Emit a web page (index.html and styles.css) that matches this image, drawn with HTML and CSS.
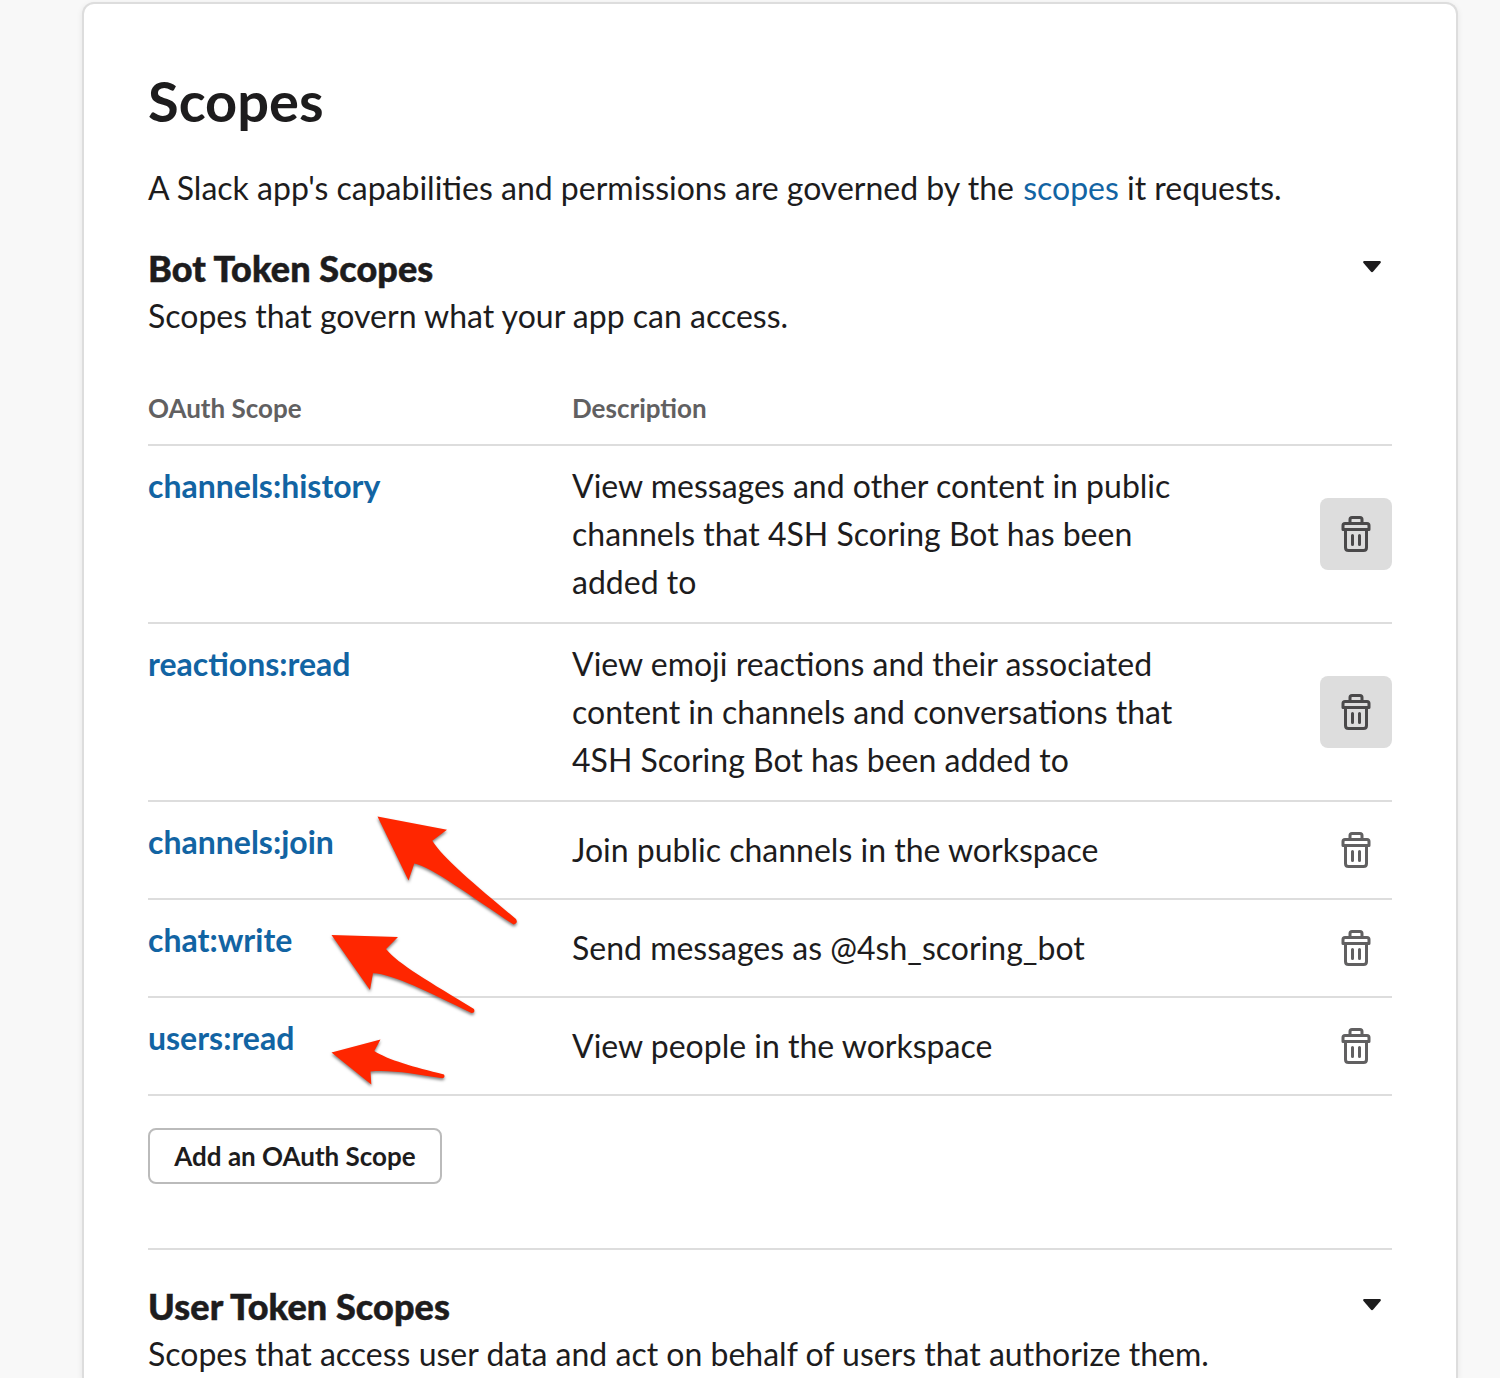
FILE: index.html
```html
<!DOCTYPE html>
<html lang="en">
<head>
<meta charset="utf-8">
<title>Scopes</title>
<link rel="stylesheet" href="styles.css">
</head>
<body>
<svg class="defs" width="0" height="0" aria-hidden="true">
  <symbol id="trash" viewBox="0 0 30 38">
    <g fill="none" stroke="currentColor" stroke-width="3" stroke-linejoin="round" stroke-linecap="round">
      <path d="M9 7V4.500Q9 2.500 11 2.500H19Q21 2.500 21 4.500V7"/>
      <path d="M4 8.500H26Q28 8.500 28 10.500V14.500H2V10.500Q2 8.500 4 8.500Z"/>
      <path d="M4.500 15V32.500Q4.500 35.500 7.500 35.500H22.500Q25.500 35.500 25.500 32.500V15"/>
      <path d="M11.500 20.500V29.500M18.500 20.500V29.500"/>
    </g>
  </symbol>
</svg>
<main class="card">
  <h1>Scopes</h1>
  <p class="intro">A Slack app's capabilities and permissions are governed by the <a href="#">scopes</a> it requests.</p>
  <section class="scopes">
    <header class="section-head">
      <h2>Bot Token Scopes</h2>
      <svg class="caret" viewBox="0 0 18 12"><path d="M1 0H17Q18.500 .5 17.500 2L10.200 10.600Q9 11.800 7.800 10.600L.5 2Q-.5 .5 1 0Z"/></svg>
    </header>
    <p>Scopes that govern what your app can access.</p>
    <div class="table">
      <div class="row head"><span>OAuth Scope</span><span>Description</span></div>
      <div class="row"><a href="#">channels:history</a><p>View messages and other content in public channels that 4SH Scoring Bot has been added to</p><button class="delete active" aria-label="Delete"><svg><use href="#trash"/></svg></button></div>
      <div class="row"><a href="#">reactions:read</a><p>View emoji reactions and their associated content in channels and conversations that 4SH Scoring Bot has been added to</p><button class="delete active" aria-label="Delete"><svg><use href="#trash"/></svg></button></div>
      <div class="row short"><a href="#">channels:join</a><p>Join public channels in the workspace</p><button class="delete" aria-label="Delete"><svg><use href="#trash"/></svg></button></div>
      <div class="row short"><a href="#">chat:write</a><p>Send messages as @4sh_scoring_bot</p><button class="delete" aria-label="Delete"><svg><use href="#trash"/></svg></button></div>
      <div class="row short"><a href="#">users:read</a><p>View people in the workspace</p><button class="delete" aria-label="Delete"><svg><use href="#trash"/></svg></button></div>
    </div>
    <button class="add">Add an OAuth Scope</button>
  </section>
  <section class="scopes user">
    <header class="section-head">
      <h2>User Token Scopes</h2>
      <svg class="caret" viewBox="0 0 18 12"><path d="M1 0H17Q18.500 .5 17.500 2L10.200 10.600Q9 11.800 7.800 10.600L.5 2Q-.5 .5 1 0Z"/></svg>
    </header>
    <p>Scopes that access user data and act on behalf of users that authorize them.</p>
  </section>
</main>
<svg class="arrows" viewBox="0 0 1500 1378" aria-hidden="true">
  <path d="M377.500 816.500L447 829.700L432.300 840.700C443 858 472 882 516 919Q518.500 923.500 513.500 924.500C470 896 432 867 414.300 863.500L408.500 880.500Z"/>
  <path d="M331.500 935L398 937L386 949C398 964 430 982 474 1009Q475.500 1013 471.500 1013C430 993 393 974 373 973.300L370 990Z"/>
  <path d="M331.500 1052.500L380.500 1039.500L374.300 1051C388 1060 414 1067 444 1074.500Q445.500 1077.500 442.500 1078.300C415 1074 390 1069.500 370.500 1071.500L371.300 1084.500Z"/>
</svg>
</body>
</html>
```
FILE: styles.css
```css
* { box-sizing: border-box; }
body {
  margin: 0;
  padding: 2px 42px 0 82px;
  height: 1378px;
  overflow: hidden;
  background: #f8f8f8;
  color: #1d1c1d;
  font: 400 32px/48px Lato, "Liberation Sans", sans-serif;
}
h1, h2, p { margin: 0; }
a { color: #1264a3; text-decoration: none; }
.defs { position: absolute; }
.card {
  height: 1376px;
  padding: 64px 64px 0;
  overflow: hidden;
  background: #fff;
  border: 2px solid #ddd;
  border-bottom: 0;
  border-radius: 12px 12px 0 0;
  box-shadow: 0 2px 6px rgba(0, 0, 0, .08);
}
h1 { font-size: 56px; line-height: 66px; font-weight: 700; }
.intro { margin-top: 30px; }
.intro a { margin-left: 1px; }
.scopes { padding-top: 32px; }
.section-head {
  display: flex;
  justify-content: space-between;
  align-items: center;
  height: 48px;
  padding-right: 11px;
}
h2 {
  font-family: "Lato Black", Lato, "Liberation Sans", sans-serif;
  font-size: 36px;
  line-height: 48px;
  font-weight: 900;
  letter-spacing: .1px;
  -webkit-text-stroke: .5px currentColor;
}
.caret { width: 18px; height: 12px; fill: #1d1c1d; margin-bottom: 2px; }
.table { margin-top: 36px; }
.row {
  display: grid;
  grid-template-columns: 424px minmax(0, 1fr) 72px;
  padding: 16px 0;
  border-bottom: 2px solid #ddd;
}
.row > p { max-width: 620px; }
.row > a { font-weight: 700; }
.head {
  height: 70px;
  color: #616061;
  font-size: 26px;
  line-height: 32px;
  font-weight: 700;
}
.short { height: 98px; }
.short > p { padding-top: 8px; }
.delete {
  display: flex;
  align-items: center;
  justify-content: center;
  align-self: center;
  width: 72px;
  height: 72px;
  padding: 0;
  border: 0;
  border-radius: 8px;
  background: none;
  color: #616061;
}
.short .delete { margin: -4px 0; }
.delete.active { background: #ddd; color: #4a494a; }
.delete svg { width: 30px; height: 38px; }
.add {
  display: block;
  width: 294px;
  height: 56px;
  margin-top: 32px;
  padding: 0;
  border: 2px solid #bbb;
  border-radius: 8px;
  background: #fff;
  color: #1d1c1d;
  font: 700 26px/52px Lato, "Liberation Sans", sans-serif;
}
.user {
  margin-top: 64px;
  border-top: 2px solid #ddd;
}
.arrows {
  position: absolute;
  left: 0;
  top: 0;
  width: 1500px;
  height: 1378px;
  fill: #ff2600;
  filter: drop-shadow(0 2px 1.5px rgba(0, 0, 0, .5));
  pointer-events: none;
}
```
